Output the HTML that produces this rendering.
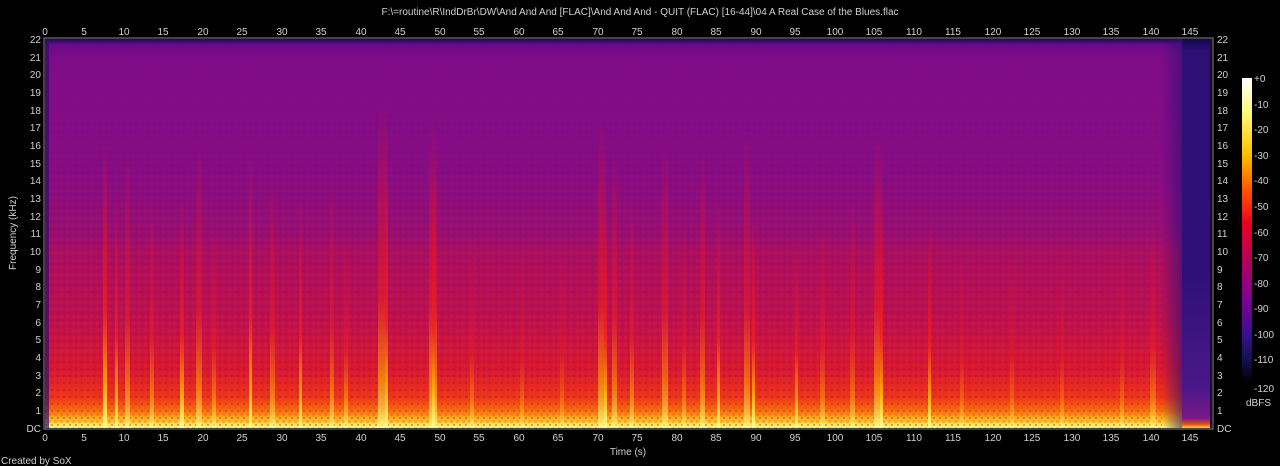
<!DOCTYPE html>
<html><head><meta charset="utf-8"><style>
html,body{margin:0;padding:0;background:#000;width:1280px;height:466px;overflow:hidden}
svg{display:block}
text{font-family:"Liberation Sans",sans-serif;font-size:10px;fill:#d0d0d0}
</style></head><body>
<svg width="1280" height="466" viewBox="0 0 1280 466" xmlns="http://www.w3.org/2000/svg">
<defs>
<linearGradient id="base" x1="0" y1="0" x2="0" y2="1">
<stop offset="0" stop-color="#1a0a60"/>
<stop offset="0.015" stop-color="#6a0a88"/>
<stop offset="0.05" stop-color="#7e0c88"/>
<stop offset="0.35" stop-color="#860c84"/>
<stop offset="0.5" stop-color="#960e74"/>
<stop offset="0.545" stop-color="#a80e62"/>
<stop offset="0.72" stop-color="#bc1050"/>
<stop offset="0.85" stop-color="#d81830"/>
<stop offset="0.92" stop-color="#ec3418"/>
<stop offset="0.955" stop-color="#f87008"/>
<stop offset="0.98" stop-color="#fcc020"/>
<stop offset="1" stop-color="#ffff80"/>
</linearGradient>
<linearGradient id="tail" x1="0" y1="0" x2="0" y2="1">
<stop offset="0" stop-color="#100850"/>
<stop offset="0.03" stop-color="#2c1074"/>
<stop offset="0.6" stop-color="#2e1078"/>
<stop offset="0.9" stop-color="#4a1888"/>
<stop offset="0.975" stop-color="#7a1888"/>
<stop offset="0.99" stop-color="#e05010"/>
<stop offset="1" stop-color="#ffd040"/>
</linearGradient>
<linearGradient id="fade" x1="0" y1="0" x2="1" y2="0">
<stop offset="0" stop-color="#2e1078" stop-opacity="0"/>
<stop offset="1" stop-color="#2e1078" stop-opacity="1"/>
</linearGradient>
<linearGradient id="streak" x1="0" y1="0" x2="0" y2="1">
<stop offset="0" stop-color="#d01040" stop-opacity="0"/>
<stop offset="0.25" stop-color="#e01030" stop-opacity="0.5"/>
<stop offset="0.6" stop-color="#f02020" stop-opacity="0.8"/>
<stop offset="0.85" stop-color="#ffb000" stop-opacity="0.9"/>
<stop offset="1" stop-color="#ffff90" stop-opacity="1"/>
</linearGradient>
<pattern id="tex" width="6" height="7" patternUnits="userSpaceOnUse">
<rect x="0" y="0" width="3" height="3" fill="#ff3020" opacity="0.25"/>
<rect x="3" y="4" width="2" height="2" fill="#600a80" opacity="0.3"/>
</pattern>
<linearGradient id="texmask" x1="0" y1="0" x2="0" y2="1">
<stop offset="0" stop-color="#fff" stop-opacity="0"/>
<stop offset="0.45" stop-color="#fff" stop-opacity="0.3"/>
<stop offset="1" stop-color="#fff" stop-opacity="1"/>
</linearGradient>
<mask id="m"><rect x="45" y="39" width="1117" height="389" fill="url(#texmask)"/></mask>
<linearGradient id="cbar" x1="0" y1="0" x2="0" y2="1">
<stop offset="0" stop-color="#ffffff"/>
<stop offset="0.12" stop-color="#fff870"/>
<stop offset="0.25" stop-color="#ffc000"/>
<stop offset="0.38" stop-color="#ff4a00"/>
<stop offset="0.48" stop-color="#e80020"/>
<stop offset="0.6" stop-color="#b00060"/>
<stop offset="0.72" stop-color="#800090"/>
<stop offset="0.84" stop-color="#3a1090"/>
<stop offset="0.93" stop-color="#10104a"/>
<stop offset="1" stop-color="#000000"/>
</linearGradient>
</defs>
<text x="640" y="15" text-anchor="middle">F:\=routine\R\IndDrBr\DW\And And And [FLAC]\And And And - QUIT (FLAC) [16-44]\04 A Real Case of the Blues.flac</text>
<rect x="44" y="38" width="1169" height="391" fill="none" stroke="#888" stroke-width="1"/>
<rect x="45" y="39" width="1137" height="389" fill="url(#base)"/>
<rect x="45" y="39" width="1117" height="389" fill="url(#tex)" mask="url(#m)"/>
<rect x="1162" y="39" width="20" height="389" fill="url(#fade)" opacity="0.6"/>
<rect x="1182" y="39" width="28" height="389" fill="url(#tail)"/>
<rect x="45" y="39" width="4" height="389" fill="#3a0a70" opacity="0.7"/>
<g fill="url(#streak)">
<rect x="103" y="140" width="4" height="288"/><rect x="115" y="200" width="3" height="228"/>
<rect x="125" y="150" width="5" height="278" opacity="0.6"/><rect x="150" y="200" width="4" height="228" opacity="0.6"/>
<rect x="180" y="200" width="4" height="228"/><rect x="196" y="140" width="6" height="288" opacity="0.6"/>
<rect x="212" y="220" width="4" height="208" opacity="0.6"/><rect x="249" y="150" width="3" height="278"/>
<rect x="270" y="180" width="5" height="248" opacity="0.6"/><rect x="299" y="200" width="3" height="228"/>
<rect x="330" y="180" width="4" height="248" opacity="0.6"/><rect x="344" y="230" width="4" height="198" opacity="0.6"/>
<rect x="378" y="100" width="10" height="328" opacity="0.7"/><rect x="385" y="170" width="3" height="258"/>
<rect x="429" y="120" width="8" height="308" opacity="0.7"/><rect x="432" y="180" width="3" height="248"/>
<rect x="470" y="240" width="4" height="188" opacity="0.5"/><rect x="520" y="250" width="4" height="178" opacity="0.4"/>
<rect x="560" y="240" width="4" height="188" opacity="0.4"/><rect x="598" y="120" width="8" height="308" opacity="0.7"/>
<rect x="604" y="200" width="3" height="228"/><rect x="612" y="150" width="5" height="278" opacity="0.6"/>
<rect x="630" y="200" width="4" height="228" opacity="0.6"/><rect x="662" y="140" width="6" height="288" opacity="0.6"/>
<rect x="682" y="220" width="4" height="208" opacity="0.5"/><rect x="700" y="150" width="5" height="278" opacity="0.6"/>
<rect x="717" y="200" width="3" height="228"/><rect x="744" y="130" width="6" height="298" opacity="0.6"/>
<rect x="752" y="210" width="3" height="218"/><rect x="795" y="240" width="3" height="188"/>
<rect x="820" y="220" width="5" height="208" opacity="0.5"/><rect x="850" y="200" width="5" height="228" opacity="0.5"/>
<rect x="874" y="130" width="8" height="298" opacity="0.7"/><rect x="880" y="200" width="3" height="228"/>
<rect x="928" y="220" width="3" height="208"/><rect x="960" y="250" width="4" height="178" opacity="0.4"/>
<rect x="1010" y="240" width="4" height="188" opacity="0.4"/><rect x="1060" y="250" width="4" height="178" opacity="0.4"/>
<rect x="1120" y="240" width="4" height="188" opacity="0.4"/><rect x="1150" y="220" width="6" height="208" opacity="0.5"/>
</g>
<rect x="1210" y="39" width="2" height="389" fill="#200830"/>
<g text-anchor="middle">
<text x="45" y="35">0</text><text x="84" y="35">5</text><text x="124" y="35">10</text><text x="163" y="35">15</text><text x="203" y="35">20</text><text x="242" y="35">25</text><text x="282" y="35">30</text><text x="321" y="35">35</text><text x="361" y="35">40</text><text x="400" y="35">45</text><text x="440" y="35">50</text><text x="479" y="35">55</text><text x="519" y="35">60</text><text x="558" y="35">65</text><text x="598" y="35">70</text><text x="637" y="35">75</text><text x="677" y="35">80</text><text x="716" y="35">85</text><text x="756" y="35">90</text><text x="795" y="35">95</text><text x="835" y="35">100</text><text x="874" y="35">105</text><text x="914" y="35">110</text><text x="953" y="35">115</text><text x="993" y="35">120</text><text x="1032" y="35">125</text><text x="1072" y="35">130</text><text x="1111" y="35">135</text><text x="1151" y="35">140</text><text x="1190" y="35">145</text>
</g>
<g text-anchor="middle">
<text x="45" y="441">0</text><text x="84" y="441">5</text><text x="124" y="441">10</text><text x="163" y="441">15</text><text x="203" y="441">20</text><text x="242" y="441">25</text><text x="282" y="441">30</text><text x="321" y="441">35</text><text x="361" y="441">40</text><text x="400" y="441">45</text><text x="440" y="441">50</text><text x="479" y="441">55</text><text x="519" y="441">60</text><text x="558" y="441">65</text><text x="598" y="441">70</text><text x="637" y="441">75</text><text x="677" y="441">80</text><text x="716" y="441">85</text><text x="756" y="441">90</text><text x="795" y="441">95</text><text x="835" y="441">100</text><text x="874" y="441">105</text><text x="914" y="441">110</text><text x="953" y="441">115</text><text x="993" y="441">120</text><text x="1032" y="441">125</text><text x="1072" y="441">130</text><text x="1111" y="441">135</text><text x="1151" y="441">140</text><text x="1190" y="441">145</text>
</g>
<g text-anchor="end">
<text x="41" y="432">DC</text><text x="41" y="414">1</text><text x="41" y="396">2</text><text x="41" y="379">3</text><text x="41" y="361">4</text><text x="41" y="343">5</text><text x="41" y="326">6</text><text x="41" y="308">7</text><text x="41" y="290">8</text><text x="41" y="273">9</text><text x="41" y="255">10</text><text x="41" y="237">11</text><text x="41" y="220">12</text><text x="41" y="202">13</text><text x="41" y="184">14</text><text x="41" y="167">15</text><text x="41" y="149">16</text><text x="41" y="131">17</text><text x="41" y="114">18</text><text x="41" y="96">19</text><text x="41" y="78">20</text><text x="41" y="61">21</text><text x="41" y="43">22</text>
</g>
<g>
<text x="1217" y="432">DC</text><text x="1217" y="414">1</text><text x="1217" y="396">2</text><text x="1217" y="379">3</text><text x="1217" y="361">4</text><text x="1217" y="343">5</text><text x="1217" y="326">6</text><text x="1217" y="308">7</text><text x="1217" y="290">8</text><text x="1217" y="273">9</text><text x="1217" y="255">10</text><text x="1217" y="237">11</text><text x="1217" y="220">12</text><text x="1217" y="202">13</text><text x="1217" y="184">14</text><text x="1217" y="167">15</text><text x="1217" y="149">16</text><text x="1217" y="131">17</text><text x="1217" y="114">18</text><text x="1217" y="96">19</text><text x="1217" y="78">20</text><text x="1217" y="61">21</text><text x="1217" y="43">22</text>
</g>
<text x="16" y="233" text-anchor="middle" transform="rotate(-90 16 233)">Frequency (kHz)</text>
<text x="628" y="455" text-anchor="middle">Time (s)</text>
<text x="1" y="464">Created by SoX</text>
<rect x="1242" y="78" width="10" height="305" fill="url(#cbar)"/>
<g>
<text x="1254" y="82">+0</text><text x="1254" y="108">-10</text><text x="1254" y="133">-20</text><text x="1254" y="159">-30</text><text x="1254" y="184">-40</text><text x="1254" y="210">-50</text><text x="1254" y="236">-60</text><text x="1254" y="261">-70</text><text x="1254" y="287">-80</text><text x="1254" y="312">-90</text><text x="1254" y="338">-100</text><text x="1254" y="363">-110</text><text x="1254" y="392">-120</text>
</g>
<text x="1246" y="406">dBFS</text>
</svg>
</body></html>
